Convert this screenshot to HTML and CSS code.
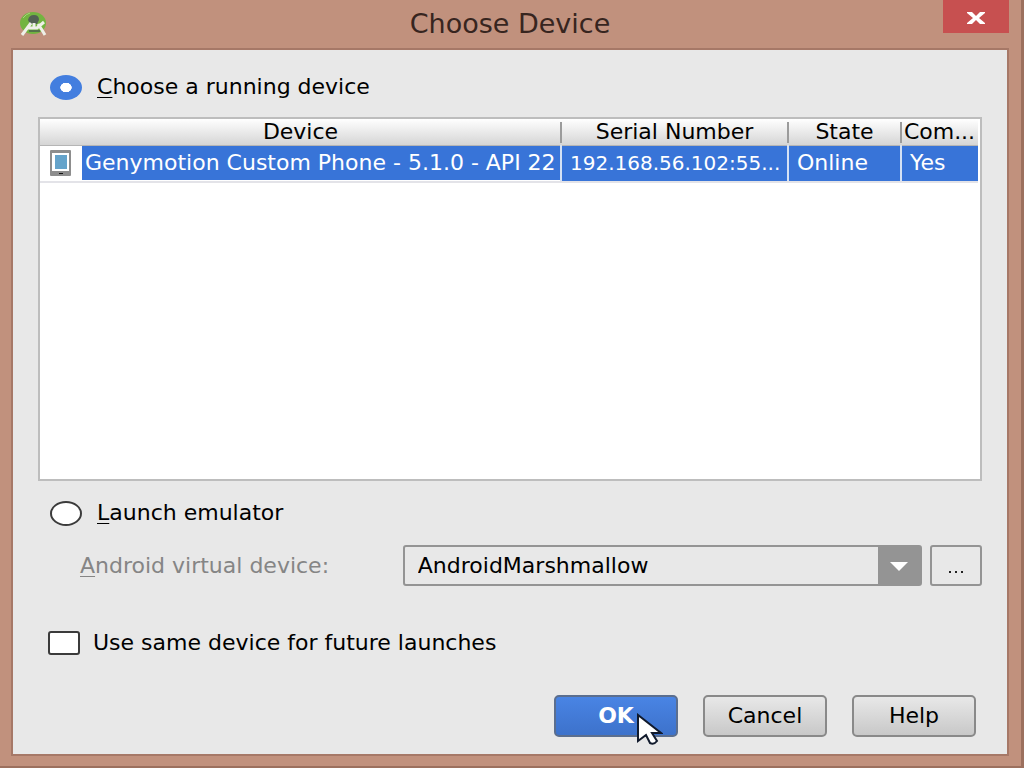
FILE: index.html
```html
<!DOCTYPE html>
<html lang="en">
<head>
    <meta charset="UTF-8">
    <meta name="viewport" content="width=device-width, initial-scale=1.0">
    <title>Choose Device</title>
    <link rel="stylesheet" href="styles.css">
</head>
<body>
    <div class="window">
        <header class="title-bar">
            <svg class="app-icon" viewBox="0 0 28 26" aria-hidden="true">
                <ellipse cx="13" cy="12" rx="13" ry="11" fill="#72b440"/>
                <path d="M3 7 Q6 3 10 2" fill="none" stroke="#a5d47a" stroke-width="1"/>
                <path d="M8 9 Q9 4 14 4 Q19 4 19 9 L17 13 H10Z" fill="#526153"/>
                <path d="M9 20 H20" stroke="#55734b" stroke-width="2"/>
                <path d="M2 24 L5 20 L11 12 M25 24 L22 19 L18 13 M8 17 H17 L24 11 M14 12 V17" fill="none" stroke="#eef0e8" stroke-width="3"/>
            </svg>
            <h1 class="title">Choose Device</h1>
            <button class="close-btn" aria-label="Close">
                <svg viewBox="0 0 18 12" aria-hidden="true"><path d="M0 0 H5 L9 4 L13 0 H18 V1 L12 6 L18 11 V12 H13 L9 8 L5 12 H0 V11 L6 6 L0 1Z" fill="#fff"/></svg>
            </button>
        </header>

        <form class="dialog">
            <label class="option"><input type="radio" name="target" class="radio" checked><span><u>C</u>hoose a running device</span></label>

            <div class="device-list">
                <table class="devices">
                    <thead>
                        <tr>
                            <th>Device</th>
                            <th class="col-serial">Serial Number</th>
                            <th class="col-state">State</th>
                            <th class="col-compat">Com...</th>
                        </tr>
                    </thead>
                    <tbody>
                        <tr>
                            <td class="device-cell">
                                <div class="device-name">
                                    <svg class="phone-icon" viewBox="0 0 21 26" aria-hidden="true">
                                        <rect width="21" height="26" rx="1" fill="#8d8d8d"/>
                                        <rect x="2" y="3" width="17" height="18" fill="#fff"/>
                                        <rect x="5" y="5" width="12" height="14" fill="#65a3ca"/>
                                        <rect x="9" y="23" width="4" height="1" fill="#111"/>
                                    </svg>
                                    <span class="name">Genymotion Custom Phone - 5.1.0 - API 22</span>
                                </div>
                            </td>
                            <td class="serial">192.168.56.102:55...</td>
                            <td>Online</td>
                            <td>Yes</td>
                        </tr>
                    </tbody>
                </table>
            </div>

            <label class="option"><input type="radio" name="target" class="radio"><span><u>L</u>aunch emulator</span></label>

            <div class="avd-row">
                <label class="avd-label" for="avd"><u>A</u>ndroid virtual device:</label>
                <div class="combo">
                    <select id="avd"><option>AndroidMarshmallow</option></select>
                </div>
                <button type="button" class="more-btn" aria-label="More">
                    <svg viewBox="0 0 16 2" aria-hidden="true"><path d="M1 1 H3 M7 1 H9 M13 1 H15" stroke="#222" stroke-width="2"/></svg>
                </button>
            </div>

            <label class="remember"><input type="checkbox" class="check"><span>Use same device for future launches</span></label>

            <div class="buttons">
                <button type="button" class="btn primary">OK
                    <svg class="cursor" viewBox="0 0 26 32" aria-hidden="true">
                        <path d="M1 2 V28 L9 22 L13 30 Q17 32 20 28 L15 20 H24Z" fill="#fff" stroke="#111a2c" stroke-width="2"/>
                    </svg>
                </button>
                <button type="button" class="btn">Cancel</button>
                <button type="button" class="btn">Help</button>
            </div>
        </form>
    </div>
</body>
</html>
```
FILE: styles.css
```css
*{
    margin:0;
    padding:0;
    box-sizing:border-box;
}
body{
    font-family:"DejaVu Sans", sans-serif;
    font-size:22px;
    line-height:26px;
    color:#000;
}
button,select{
    font:inherit;
    color:inherit;
}
u{
    text-decoration-thickness:1px;
    text-underline-offset:3px;
}
.window{
    min-height:100vh;
    display:flex;
    flex-direction:column;
    background:#c1917d;
    padding:0 12px 10px 11px;
    border-right:3px solid #9c705e;
    border-bottom:2px solid #9c705e;
}
.title-bar{
    height:48px;
    display:grid;
    grid-template-columns:66px 1fr 66px;
    align-items:center;
}
.app-icon{
    width:28px;
    height:26px;
    margin-left:9px;
}
.title{
    font-size:27px;
    font-weight:400;
    text-align:center;
    color:#37251f;
}
.close-btn{
    align-self:start;
    height:33px;
    border:none;
    background:#c75050;
}
.close-btn svg{
    width:18px;
    height:12px;
}
.dialog{
    flex:1;
    display:flex;
    flex-direction:column;
    background:#e8e8e8;
    border:2px solid #a67867;
    padding:24px 25px 17px;
}
.option,.remember{
    display:flex;
    align-items:center;
}
.option{
    gap:15px;
    padding-left:12px;
}
.radio,.check{
    appearance:none;
    background:#fff;
    border:2px solid #3b3b3b;
}
.radio{
    width:32px;
    height:25px;
    border-radius:50%;
}
.radio:checked{
    border:none;
    background:radial-gradient(ellipse 6px 5px, #fff 90%, #437edf 100%);
}
.device-list{
    flex:1;
    margin:17px 0 19px;
    background:#fff;
    border:2px solid #bdbdbd;
    padding-right:2px;
}
.devices{
    width:100%;
    table-layout:fixed;
    border-collapse:collapse;
    white-space:nowrap;
}
.devices th{
    position:relative;
    height:26px;
    font-weight:400;
    background:linear-gradient(#fff, #d5d5d5);
    border-bottom:1px solid #b5b5b5;
}
.devices th + th::before{
    content:"";
    position:absolute;
    left:-1px;
    top:3px;
    bottom:2px;
    width:2px;
    background:#9b9b9b;
}
.col-serial{
    width:227px;
}
.col-state{
    width:113px;
}
.col-compat{
    width:77px;
}
.devices td{
    height:36px;
    padding-left:8px;
    background:#3874d8;
    color:#fff;
    border-bottom:2px solid #e3e3e8;
    overflow:hidden;
}
.devices td + td{
    border-left:2px solid #d5e1f4;
}
.devices .serial{
    font-size:20px;
}
.devices .device-cell{
    padding:0;
    background:#fff;
}
.device-name{
    display:flex;
    align-items:center;
}
.phone-icon{
    width:21px;
    height:26px;
    flex:none;
    margin:0 11px 0 10px;
}
.name{
    flex:1;
    overflow:hidden;
    padding-left:3px;
    line-height:34px;
    background:#3874d8;
}
.avd-row{
    display:flex;
    align-items:center;
    gap:8px;
    margin-top:19px;
}
.avd-label{
    flex:1;
    padding-left:42px;
    color:#858585;
}
.combo{
    position:relative;
    width:55%;
}
.combo select{
    appearance:none;
    display:block;
    width:100%;
    height:41px;
    padding-left:13px;
    border:2px solid #949494;
    border-radius:3px;
    background:linear-gradient(to left, #949494 42px, #e8e8e8 42px);
}
.combo::after{
    content:"";
    position:absolute;
    right:14px;
    top:17px;
    border:9px solid transparent;
    border-top-color:#fff;
    border-bottom:none;
    pointer-events:none;
}
.more-btn{
    width:52px;
    height:41px;
    border:2px solid #949494;
    border-radius:3px;
    background:#e8e8e8;
}
.more-btn svg{
    width:16px;
    height:2px;
}
.remember{
    gap:13px;
    margin-top:44px;
    padding-left:10px;
}
.check{
    width:32px;
    height:24px;
    border-radius:3px;
}
.buttons{
    display:flex;
    justify-content:flex-end;
    gap:25px;
    margin-top:39px;
    padding-right:6px;
}
.btn{
    position:relative;
    width:124px;
    height:42px;
    border:2px solid #898989;
    border-radius:5px;
    background:linear-gradient(#e8e8e8, #c8c8c8);
}
.primary{
    border-color:#5b6e8e;
    background:linear-gradient(#4984e4, #3d72cb);
    color:#fff;
    font-weight:700;
}
/* mouse pointer resting on the default button */
.cursor{
    position:absolute;
    left:81px;
    top:16px;
    width:26px;
    height:32px;
}
```
